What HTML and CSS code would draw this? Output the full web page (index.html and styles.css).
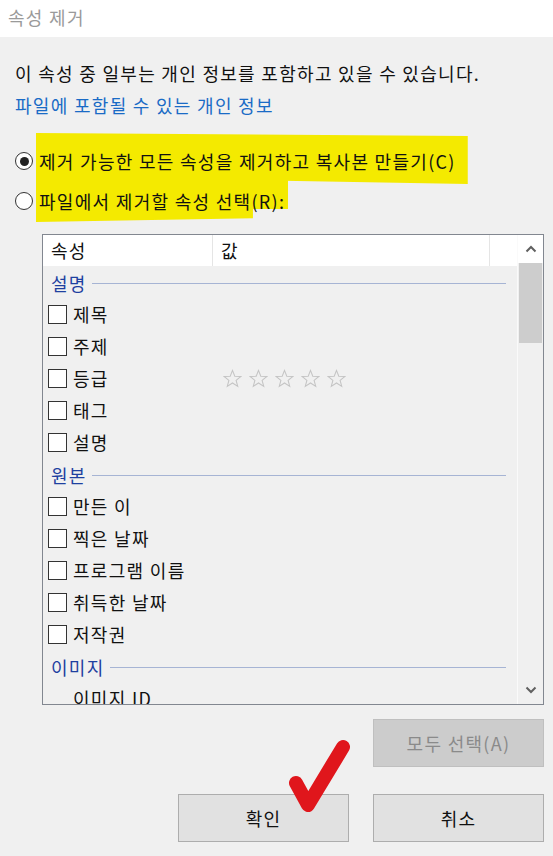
FILE: index.html
```html
<!DOCTYPE html>
<html>
<head>
  <title>속성 제거</title>
  <link rel="stylesheet" href="styles.css">
</head>
<body>

  <!-- Title bar -->
  <div class="titlebar">속성 제거</div>

  <div class="dialog">
    <p class="intro">이 속성 중 일부는 개인 정보를 포함하고 있을 수 있습니다.</p>
    <a class="link" href="#">파일에 포함될 수 있는 개인 정보</a>

    <!-- Radio options -->
    <div class="options">
      <div class="option">
        <span class="radio checked"></span>
        <span class="label hl-one">제거 가능한 모든 속성을 제거하고 복사본 만들기(C)</span>
      </div>
      <div class="option">
        <span class="radio"></span>
        <span class="label hl-two">파일에서 제거할 속성 선택(R):</span>
      </div>
    </div>

    <!-- Property list -->
    <div class="listbox">
      <div class="listmain">
        <div class="listhead">
          <div class="col">속성</div>
          <div class="col">값</div>
          <div class="col"></div>
        </div>
        <div class="listbody">
          <div class="group"><span>설명</span><i></i></div>
          <div class="row"><span class="check"></span><span>제목</span></div>
          <div class="row"><span class="check"></span><span>주제</span></div>
          <div class="row">
            <span class="check"></span><span class="name">등급</span>
            <span class="stars">
              <svg viewBox="0 0 20 20"><path d="M10 1.5 12.4 7.6 18.8 7.9 13.8 12 15.5 18.3 10 14.7 4.5 18.3 6.2 12 1.2 7.9 7.6 7.6Z"/></svg>
              <svg viewBox="0 0 20 20"><path d="M10 1.5 12.4 7.6 18.8 7.9 13.8 12 15.5 18.3 10 14.7 4.5 18.3 6.2 12 1.2 7.9 7.6 7.6Z"/></svg>
              <svg viewBox="0 0 20 20"><path d="M10 1.5 12.4 7.6 18.8 7.9 13.8 12 15.5 18.3 10 14.7 4.5 18.3 6.2 12 1.2 7.9 7.6 7.6Z"/></svg>
              <svg viewBox="0 0 20 20"><path d="M10 1.5 12.4 7.6 18.8 7.9 13.8 12 15.5 18.3 10 14.7 4.5 18.3 6.2 12 1.2 7.9 7.6 7.6Z"/></svg>
              <svg viewBox="0 0 20 20"><path d="M10 1.5 12.4 7.6 18.8 7.9 13.8 12 15.5 18.3 10 14.7 4.5 18.3 6.2 12 1.2 7.9 7.6 7.6Z"/></svg>
            </span>
          </div>
          <div class="row"><span class="check"></span><span>태그</span></div>
          <div class="row"><span class="check"></span><span>설명</span></div>
          <div class="group"><span>원본</span><i></i></div>
          <div class="row"><span class="check"></span><span>만든 이</span></div>
          <div class="row"><span class="check"></span><span>찍은 날짜</span></div>
          <div class="row"><span class="check"></span><span>프로그램 이름</span></div>
          <div class="row"><span class="check"></span><span>취득한 날짜</span></div>
          <div class="row"><span class="check"></span><span>저작권</span></div>
          <div class="group"><span>이미지</span><i></i></div>
          <div class="row plain"><span>이미지 ID</span></div>
        </div>
      </div>
      <!-- Scrollbar -->
      <div class="scrollbar">
        <div class="arrow up">
          <svg viewBox="0 0 12 8"><path d="M1.5 6.5 6 2 10.5 6.5"/></svg>
        </div>
        <div class="track"><div class="thumb"></div></div>
        <div class="arrow down">
          <svg viewBox="0 0 12 8"><path d="M1.5 1.5 6 6 10.5 1.5"/></svg>
        </div>
      </div>
    </div>

    <!-- Buttons -->
    <div class="actions">
      <div class="btnrow">
        <button class="btn" disabled>모두 선택(A)</button>
      </div>
      <div class="btnrow last">
        <button class="btn">확인</button>
        <button class="btn">취소</button>
        <svg class="mark" viewBox="0 0 80 100">
          <path d="M11 46 L23 68 L58 10"/>
        </svg>
      </div>
    </div>
  </div>

</body>
</html>
```

FILE: styles.css
```css
body {
  margin: 0;
  width: 553px;
  height: 856px;
  overflow: hidden;
  background-color: #f0f0f0;
  font-family: "Noto Sans CJK KR", "Noto Sans", sans-serif;
  letter-spacing: 1.3px;
  color: #111;
}
.titlebar {
  height: 37px;
  line-height: 35px;
  padding-left: 8px;
  background: white;
  color: #9a9a9a;
  font-size: 18px;
}
.dialog {
  padding: 0 9px 0 15px;
}
.intro {
  margin: 20px 0 0 0;
  font-size: 18px;
  line-height: 32px;
}
.link {
  display: block;
  font-size: 18px;
  line-height: 32px;
  color: #1a6bc6;
  text-decoration: none;
}
/* Radio options */
.options {
  margin-top: 20px;
}
.option {
  display: flex;
  align-items: center;
  height: 40px;
  font-size: 18px;
}
.radio {
  width: 16px;
  height: 16px;
  border: 1px solid #333;
  border-radius: 50%;
  background: white;
  display: flex;
  align-items: center;
  justify-content: center;
  flex-shrink: 0;
}
.radio.checked::after {
  content: "";
  width: 9px;
  height: 9px;
  border-radius: 50%;
  background: #222;
}
.label {
  position: relative;
  margin-left: 6px;
  z-index: 0;
}
.label::before {
  content: "";
  position: absolute;
  z-index: -1;
  background: #f4ea00;
}
.hl-one::before {
  top: -15px;
  bottom: -10px;
  left: -3px;
  right: -12px;
  clip-path: polygon(0 0, 100% 6%, 100% 100%, 4% 86%, 0 86%);
}
.hl-two::before {
  top: -12px;
  bottom: -8px;
  left: -3px;
  right: -3px;
  clip-path: polygon(0 0, 100% 0, 100% 72%, 86% 72%, 86% 92%, 0 100%);
}
/* Property list */
.listbox {
  margin: 13px 0 0 27px;
  height: 469px;
  border: 1px solid #828790;
  display: flex;
  background: #f0f0f0;
}
.listmain {
  flex: 1;
  overflow: hidden;
}
.listhead {
  height: 31px;
  background: white;
  display: grid;
  grid-template-columns: 170px 277px 1fr;
  font-size: 18px;
  line-height: 31px;
}
.listhead .col {
  padding-left: 8px;
  border-right: 1px solid #e5e5e5;
}
.listhead .col:last-child {
  border-right: none;
}
.listbody {
  height: 438px;
  overflow: hidden;
  font-size: 18px;
}
.group {
  height: 32px;
  display: flex;
  align-items: center;
  padding: 2px 11px 0 8px;
  box-sizing: border-box;
  color: #1e40a0;
}
.group i {
  flex: 1;
  height: 1px;
  margin-left: 5px;
  background: #a6b4d4;
}
.row {
  height: 32px;
  display: flex;
  align-items: center;
  padding-left: 5px;
}
.row.plain {
  padding-left: 30px;
}
.check {
  width: 17px;
  height: 17px;
  border: 1px solid #333;
  background: white;
  margin-right: 6px;
  flex-shrink: 0;
}
.row .name {
  width: 150px;
}
.stars {
  display: flex;
  gap: 7px;
}
.stars svg {
  width: 19px;
  height: 19px;
  fill: none;
  stroke: #c4c4c4;
  stroke-width: 1.1;
}
/* Scrollbar */
.scrollbar {
  width: 25px;
  border-left: 1px solid #fafafa;
  display: flex;
  flex-direction: column;
}
.arrow {
  height: 28px;
  display: flex;
  align-items: center;
  justify-content: center;
}
.arrow.up {
  background: white;
}
.arrow svg {
  width: 12px;
  height: 8px;
  fill: none;
  stroke: #606060;
  stroke-width: 2;
}
.track {
  flex: 1;
  padding: 0 1px;
}
.thumb {
  height: 80px;
  background: #cdcdcd;
}
/* Buttons */
.actions {
  display: flex;
  flex-direction: column;
}
.btnrow {
  display: flex;
  justify-content: flex-end;
  gap: 24px;
  margin-top: 14px;
}
.btnrow.last {
  margin-top: 27px;
  position: relative;
}
.btn {
  width: 171px;
  height: 48px;
  background: #e1e1e1;
  border: 1px solid #adadad;
  font-family: "Noto Sans CJK KR", "Noto Sans", sans-serif;
  font-size: 18px;
  letter-spacing: 1.3px;
  color: #111;
  padding: 0;
}
.btn:disabled {
  background: #cccccc;
  border-color: #bfbfbf;
  color: #8a8a8a;
}
.mark {
  position: absolute;
  left: 270px;
  top: -57px;
  width: 80px;
  height: 100px;
  fill: none;
  stroke: #e0161c;
  stroke-width: 14;
  stroke-linecap: round;
  stroke-linejoin: round;
}
```
